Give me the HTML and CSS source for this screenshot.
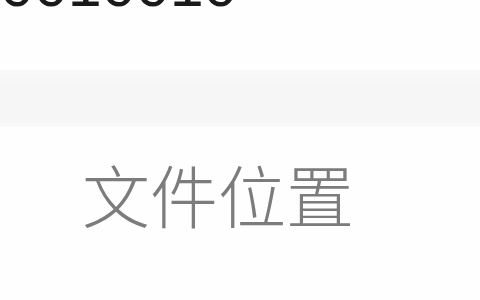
FILE: index.html
```html
<!DOCTYPE html>
<html lang="zh-CN">
<head>
<meta charset="utf-8">
<title>文件位置</title>
<link rel="stylesheet" href="styles.css">
</head>
<body>
<div class="page">
  <div class="value">0010010</div>
  <div class="band"></div>
  <div class="label">文件位置</div>
</div>
</body>
</html>
```
FILE: styles.css
```css
html, body {
  margin: 0;
  padding: 0;
  background: #ffffff;
  overflow: hidden;
}
.page {
  width: 480px;
  height: 300px;
  display: flex;
  flex-direction: column;
  background: #fefefe;
}
.value {
  margin-top: -45px;
  height: 61px;
  padding-left: 0;
  font-family: "Liberation Sans", Arial, sans-serif;
  font-size: 61px;
  line-height: 61px;
  color: #1a1a1a;
  white-space: nowrap;
  letter-spacing: 0;
}
.band {
  margin-top: 54px;
  height: 57px;
  background: linear-gradient(#f9f9f9 0, #f6f6f6 30%, #f6f6f6 85%, #f9f9f9 100%);
}
.label {
  margin-top: 33px;
  padding-left: 82px;
  height: 68px;
  font-family: "Noto Sans CJK SC", "Noto Sans", sans-serif;
  font-size: 68px;
  line-height: 68px;
  font-weight: 300;
  color: #7c7c7c;
  white-space: nowrap;
}
```
